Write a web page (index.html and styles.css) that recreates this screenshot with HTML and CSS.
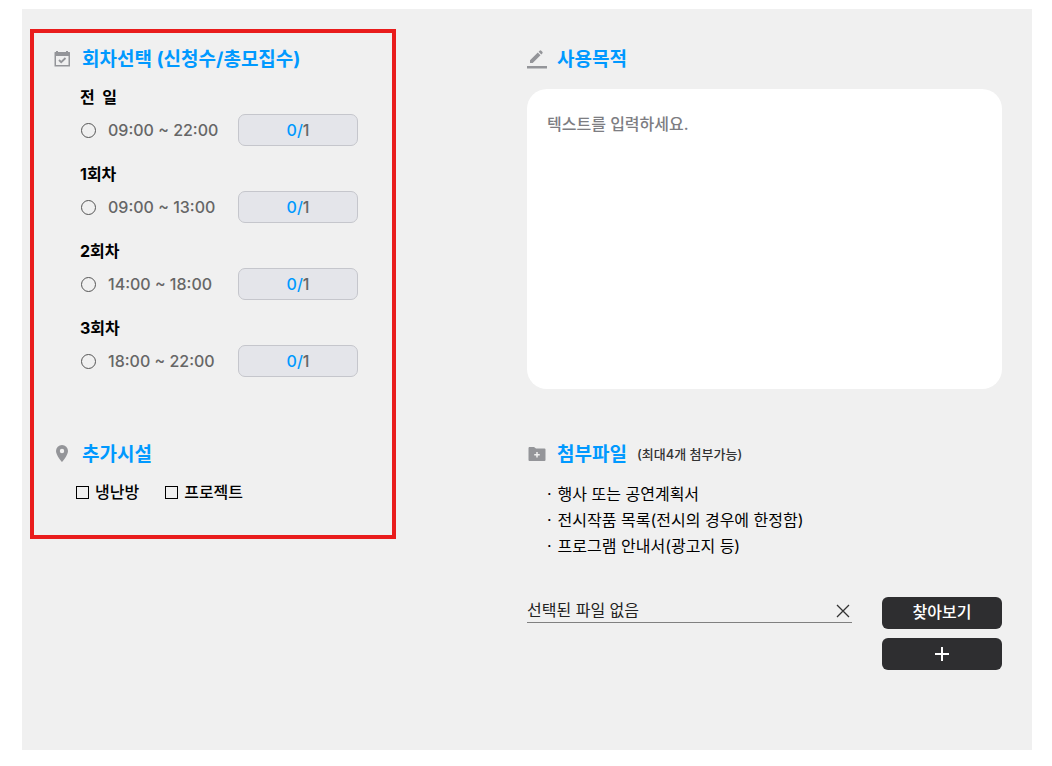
FILE: index.html
```html
<!DOCTYPE html>
<html lang="ko">

<head>
    <meta charset="UTF-8">
    <meta name="viewport" content="width=device-width, initial-scale=1.0">
    <title>대관 신청</title>
    <link rel="stylesheet" href="styles.css">
</head>

<body>
    <form class="panel">
        <section class="sessions">
            <h2 class="title">
                <svg class="icon" viewBox="0 0 20 20">
                    <path fill="#949599" fill-rule="evenodd" d="M4 3V2h2v1h8V2h2v1h1.500a.5.5 0 0 1 .5.5v14H2.500v-14A.5.5 0 0 1 3 3zM4 7v9h12.500V7z" />
                    <path fill="none" stroke="#949599" stroke-width="1.800" d="M7 11l2.200 2.200 4.300-4.200" />
                </svg>
                회차선택 (신청수/총모집수)
            </h2>
            <div class="session-list">
                <div class="session">
                    <h3 class="session-name">전&nbsp; 일</h3>
                    <div class="session-row">
                        <input type="radio" name="session" id="session0">
                        <label for="session0">09:00 ~ 22:00</label>
                        <span class="count"><em>0/</em>1</span>
                    </div>
                </div>
                <div class="session">
                    <h3 class="session-name">1회차</h3>
                    <div class="session-row">
                        <input type="radio" name="session" id="session1">
                        <label for="session1">09:00 ~ 13:00</label>
                        <span class="count"><em>0/</em>1</span>
                    </div>
                </div>
                <div class="session">
                    <h3 class="session-name">2회차</h3>
                    <div class="session-row">
                        <input type="radio" name="session" id="session2">
                        <label for="session2">14:00 ~ 18:00</label>
                        <span class="count"><em>0/</em>1</span>
                    </div>
                </div>
                <div class="session">
                    <h3 class="session-name">3회차</h3>
                    <div class="session-row">
                        <input type="radio" name="session" id="session3">
                        <label for="session3">18:00 ~ 22:00</label>
                        <span class="count"><em>0/</em>1</span>
                    </div>
                </div>
            </div>
        </section>

        <section class="purpose">
            <h2 class="title">
                <svg class="icon" viewBox="0 0 20 20">
                    <path fill="#949599" d="M3 11.300L10.800 3.500l2.700 2.700L5.700 14H3zM11.600 2.700l1-1a1.200 1.200 0 0 1 1.700 0l1 1a1.200 1.200 0 0 1 0 1.700l-1 1zM0 17h20v2.500H0z" />
                </svg>
                <label for="purpose">사용목적</label>
            </h2>
            <textarea id="purpose" placeholder="텍스트를 입력하세요."></textarea>
        </section>

        <section class="extras">
            <h2 class="title">
                <svg class="icon" viewBox="0 0 20 20">
                    <path fill="#949599" fill-rule="evenodd" d="M10 1a6 6 0 0 0-6 6c0 4.500 6 11 6 11s6-6.500 6-11a6 6 0 0 0-6-6zm0 3.800a2.200 2.200 0 1 1 0 4.400 2.200 2.200 0 0 1 0-4.400z" />
                </svg>
                추가시설
            </h2>
            <div class="checks">
                <label><input type="checkbox">냉난방</label>
                <label><input type="checkbox">프로젝트</label>
            </div>
        </section>

        <section class="files">
            <h2 class="title">
                <svg class="icon" viewBox="0 0 20 20">
                    <path fill="#949599" fill-rule="evenodd" d="M2 3h5l2 1.500h8.500a1 1 0 0 1 1 1V16a1 1 0 0 1-1 1H2.500a1 1 0 0 1-1-1V4zM9.250 8v2H7.250v1.500h2v2h1.500v-2h2V10h-2V8z" />
                </svg>
                첨부파일
                <small>(최대4개 첨부가능)</small>
            </h2>
            <ul class="file-guide">
                <li>행사 또는 공연계획서</li>
                <li>전시작품 목록(전시의 경우에 한정함)</li>
                <li>프로그램 안내서(광고지 등)</li>
            </ul>
            <div class="upload">
                <div class="file-name">
                    <input type="text" value="선택된 파일 없음" aria-label="첨부파일" readonly>
                    <button type="button" class="clear" aria-label="삭제">
                        <svg viewBox="0 0 18 18">
                            <path d="M3 3l12 12M15 3L3 15" />
                        </svg>
                    </button>
                </div>
                <div class="upload-buttons">
                    <button type="button" class="dark browse">찾아보기</button>
                    <button type="button" class="dark" aria-label="추가">
                        <svg viewBox="0 0 18 18">
                            <path d="M9 2v14M2 9h14" />
                        </svg>
                    </button>
                </div>
            </div>
        </section>

        <div class="highlight"></div>
    </form>
</body>

</html>
```
FILE: styles.css
```css
* {
    box-sizing: border-box;
}

body {
    margin: 0;
    background-color: #fff;
    color: #000;
    font-family: Inter, 'Noto Sans CJK KR', sans-serif;
    font-size: 16px;
    line-height: 24px;
}

input,
textarea,
button {
    margin: 0;
    font-family: inherit;
    font-size: 16px;
}

.panel {
    display: grid;
    grid-template-columns: 1fr 1fr;
    row-gap: 52px;
    margin: 9px 20px 16px 22px;
    padding: 37px 30px 80px;
    background-color: #f0f0f0;
}

/* red frame round the left column */
.highlight {
    grid-area: 1 / 1 / 3 / 2;
    margin: -17px 131px 131px -22px;
    border: 4px solid #e91c1c;
    pointer-events: none;
}

.sessions {
    grid-area: 1 / 1;
}

.purpose {
    grid-area: 1 / 2;
}

.extras {
    grid-area: 2 / 1;
}

.files {
    grid-area: 2 / 2;
}

.title {
    display: flex;
    align-items: center;
    gap: 10px;
    margin: 0;
    color: #0099ff;
    font-size: 19px;
    font-weight: 700;
    line-height: 28px;
}

.title small {
    margin-bottom: 2px;
    color: #333;
    font-size: 13px;
    font-weight: 500;
    line-height: 24px;
}

.icon {
    width: 20px;
    height: 20px;
    margin-bottom: 2px;
}

.session-list {
    display: flex;
    flex-direction: column;
    gap: 16px;
    margin-top: 11px;
    padding-left: 28px;
}

.session-name {
    margin: 0 0 5px;
    font-size: 16px;
    font-weight: 700;
}

.session-row {
    display: flex;
    align-items: center;
}

.session-row input {
    appearance: none;
    width: 15px;
    height: 15px;
    margin: 0 12px 0 1px;
    border: 1px solid #555;
    border-radius: 50%;
}

.session-row input:checked {
    background-color: #0099ff;
}

.session-row label {
    width: 130px;
    color: #666;
    font-weight: 500;
}

.count {
    width: 120px;
    height: 32px;
    border: 1px solid #c5c6cc;
    border-radius: 7px;
    background-color: #e4e5ea;
    color: #666;
    font-weight: 500;
    line-height: 30px;
    text-align: center;
}

.count em {
    color: #0099ff;
    font-style: normal;
}

textarea {
    display: block;
    width: 100%;
    height: 300px;
    margin-top: 15px;
    padding: 20px;
    border: none;
    border-radius: 20px;
    background-color: #fff;
    line-height: 30px;
    resize: none;
}

textarea::placeholder {
    color: #7d7d82;
    font-weight: 500;
}

.checks {
    display: flex;
    gap: 26px;
    margin-top: 11px;
    padding-left: 24px;
    font-weight: 500;
}

.checks label {
    display: flex;
    align-items: center;
    gap: 6px;
}

.checks input {
    appearance: none;
    width: 13px;
    height: 13px;
    border: 1px solid #000;
}

.checks input:checked {
    background-color: #0099ff;
}

.file-guide {
    margin: 12px 0 0;
    padding: 0 0 0 20px;
    line-height: 26px;
    list-style: none;
}

.file-guide li::before {
    content: "·";
    margin-right: 6px;
}

.upload {
    display: flex;
    align-items: flex-start;
    gap: 30px;
    margin-top: 38px;
}

.file-name {
    display: flex;
    flex: 1;
    height: 26px;
    border-bottom: 1px solid #808080;
}

.file-name input {
    flex: 1;
    min-width: 0;
    padding: 0 0 2px;
    border: none;
    background: none;
    color: #222;
}

.clear {
    width: 18px;
    padding: 2px 0 0;
    border: none;
    background: none;
    cursor: pointer;
}

.clear svg {
    display: block;
    width: 18px;
    height: 18px;
    stroke: #333;
    stroke-width: 1.3;
}

.upload-buttons {
    display: flex;
    flex-direction: column;
    gap: 9px;
    width: 120px;
}

.dark {
    display: flex;
    align-items: center;
    justify-content: center;
    height: 32px;
    padding: 0;
    border: none;
    border-radius: 6px;
    background-color: #2e2e30;
    color: #fff;
    font-weight: 500;
    cursor: pointer;
}

.browse {
    padding-bottom: 4px;
}

.dark svg {
    width: 18px;
    height: 18px;
    stroke: #fff;
    stroke-width: 2;
}
```
